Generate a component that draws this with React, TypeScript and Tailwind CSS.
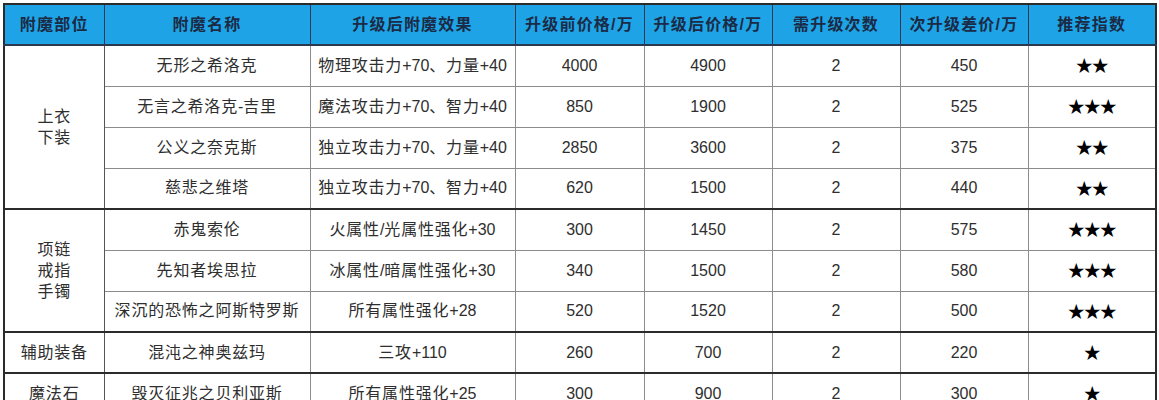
import React from "react";

const CJK = /([\u2000-\u206f\u3000-\u9fff\uff00-\uffef]+)/;

function T({ s }: { s: string }) {
  const parts = s.split(CJK).filter((p) => p.length > 0);
  return (
    <>
      {parts.map((p, i) =>
        CJK.test(p) ? (
          <span key={i} className="tracking-[0.8px]">
            {p}
          </span>
        ) : (
          <span key={i}>{p}</span>
        )
      )}
    </>
  );
}

type Row = [string, string, string, string, string, string, string];

const groups: { label: string[]; rows: Row[] }[] = [
  {
    label: ["上衣", "下装"],
    rows: [
      ["无形之希洛克", "物理攻击力+70、力量+40", "4000", "4900", "2", "450", "★★"],
      ["无言之希洛克-吉里", "魔法攻击力+70、智力+40", "850", "1900", "2", "525", "★★★"],
      ["公义之奈克斯", "独立攻击力+70、力量+40", "2850", "3600", "2", "375", "★★"],
      ["慈悲之维塔", "独立攻击力+70、智力+40", "620", "1500", "2", "440", "★★"],
    ],
  },
  {
    label: ["项链", "戒指", "手镯"],
    rows: [
      ["赤鬼索伦", "火属性/光属性强化+30", "300", "1450", "2", "575", "★★★"],
      ["先知者埃思拉", "冰属性/暗属性强化+30", "340", "1500", "2", "580", "★★★"],
      ["深沉的恐怖之阿斯特罗斯", "所有属性强化+28", "520", "1520", "2", "500", "★★★"],
    ],
  },
  {
    label: ["辅助装备"],
    rows: [["混沌之神奥兹玛", "三攻+110", "260", "700", "2", "220", "★"]],
  },
  {
    label: ["魔法石"],
    rows: [["毁灭征兆之贝利亚斯", "所有属性强化+25", "300", "900", "2", "300", "★"]],
  },
];

const headers = [
  "附魔部位",
  "附魔名称",
  "升级后附魔效果",
  "升级前价格/万",
  "升级后价格/万",
  "需升级次数",
  "次升级差价/万",
  "推荐指数",
];

const widths = [100, 206, 205, 129, 128, 128, 128, 128];

export default function App() {
  return (
    <div className="bg-white w-[1159px] h-[400px] overflow-hidden pt-[3px] pl-[3px] font-['Liberation_Sans','Noto_Sans_CJK_SC',sans-serif]">
      <table className="border-collapse table-fixed w-[1152px] border-2 border-[#2b2b2b] text-[16px] text-[#2e2e2e]">
        <colgroup>
          {widths.map((w, i) => (
            <col key={i} style={{ width: w }} />
          ))}
        </colgroup>
        <thead>
          <tr className="h-[41px] bg-[#1ea4e6]">
            {headers.map((h, i) => (
              <th
                key={i}
                className="border border-[#2b3850] border-b-2 font-bold text-[#1b2a45] text-center p-0 text-[16px] tracking-[1.2px]"
              >
                {h}
              </th>
            ))}
          </tr>
        </thead>
        <tbody>
          {groups.map((g, gi) =>
            g.rows.map((r, ri) => {
              const last = ri === g.rows.length - 1;
              const bottom = last ? "border-b-2 border-b-[#2b2b2b]" : "border-b border-b-[#8c8c8c]";
              return (
                <tr key={gi + "-" + ri} className="h-[41px]">
                  {ri === 0 && (
                    <td
                      rowSpan={g.rows.length}
                      className="border-r border-r-[#555] border-b-2 border-b-[#2b2b2b] text-center p-0 leading-[21px]"
                    >
                      {g.label.map((l, li) => (
                        <div key={li}>
                          <T s={l} />
                        </div>
                      ))}
                    </td>
                  )}
                  {r.map((c, ci) => (
                    <td
                      key={ci}
                      className={"border-r border-r-[#8c8c8c] text-center p-0 whitespace-nowrap " + bottom}
                    >
                      {ci === 6 ? (
                        <span className="text-black font-['Noto_Sans_CJK_SC',sans-serif] text-[17px] tracking-[-1px]">
                          {c}
                        </span>
                      ) : (
                        <T s={c} />
                      )}
                    </td>
                  ))}
                </tr>
              );
            })
          )}
        </tbody>
      </table>
    </div>
  );
}
